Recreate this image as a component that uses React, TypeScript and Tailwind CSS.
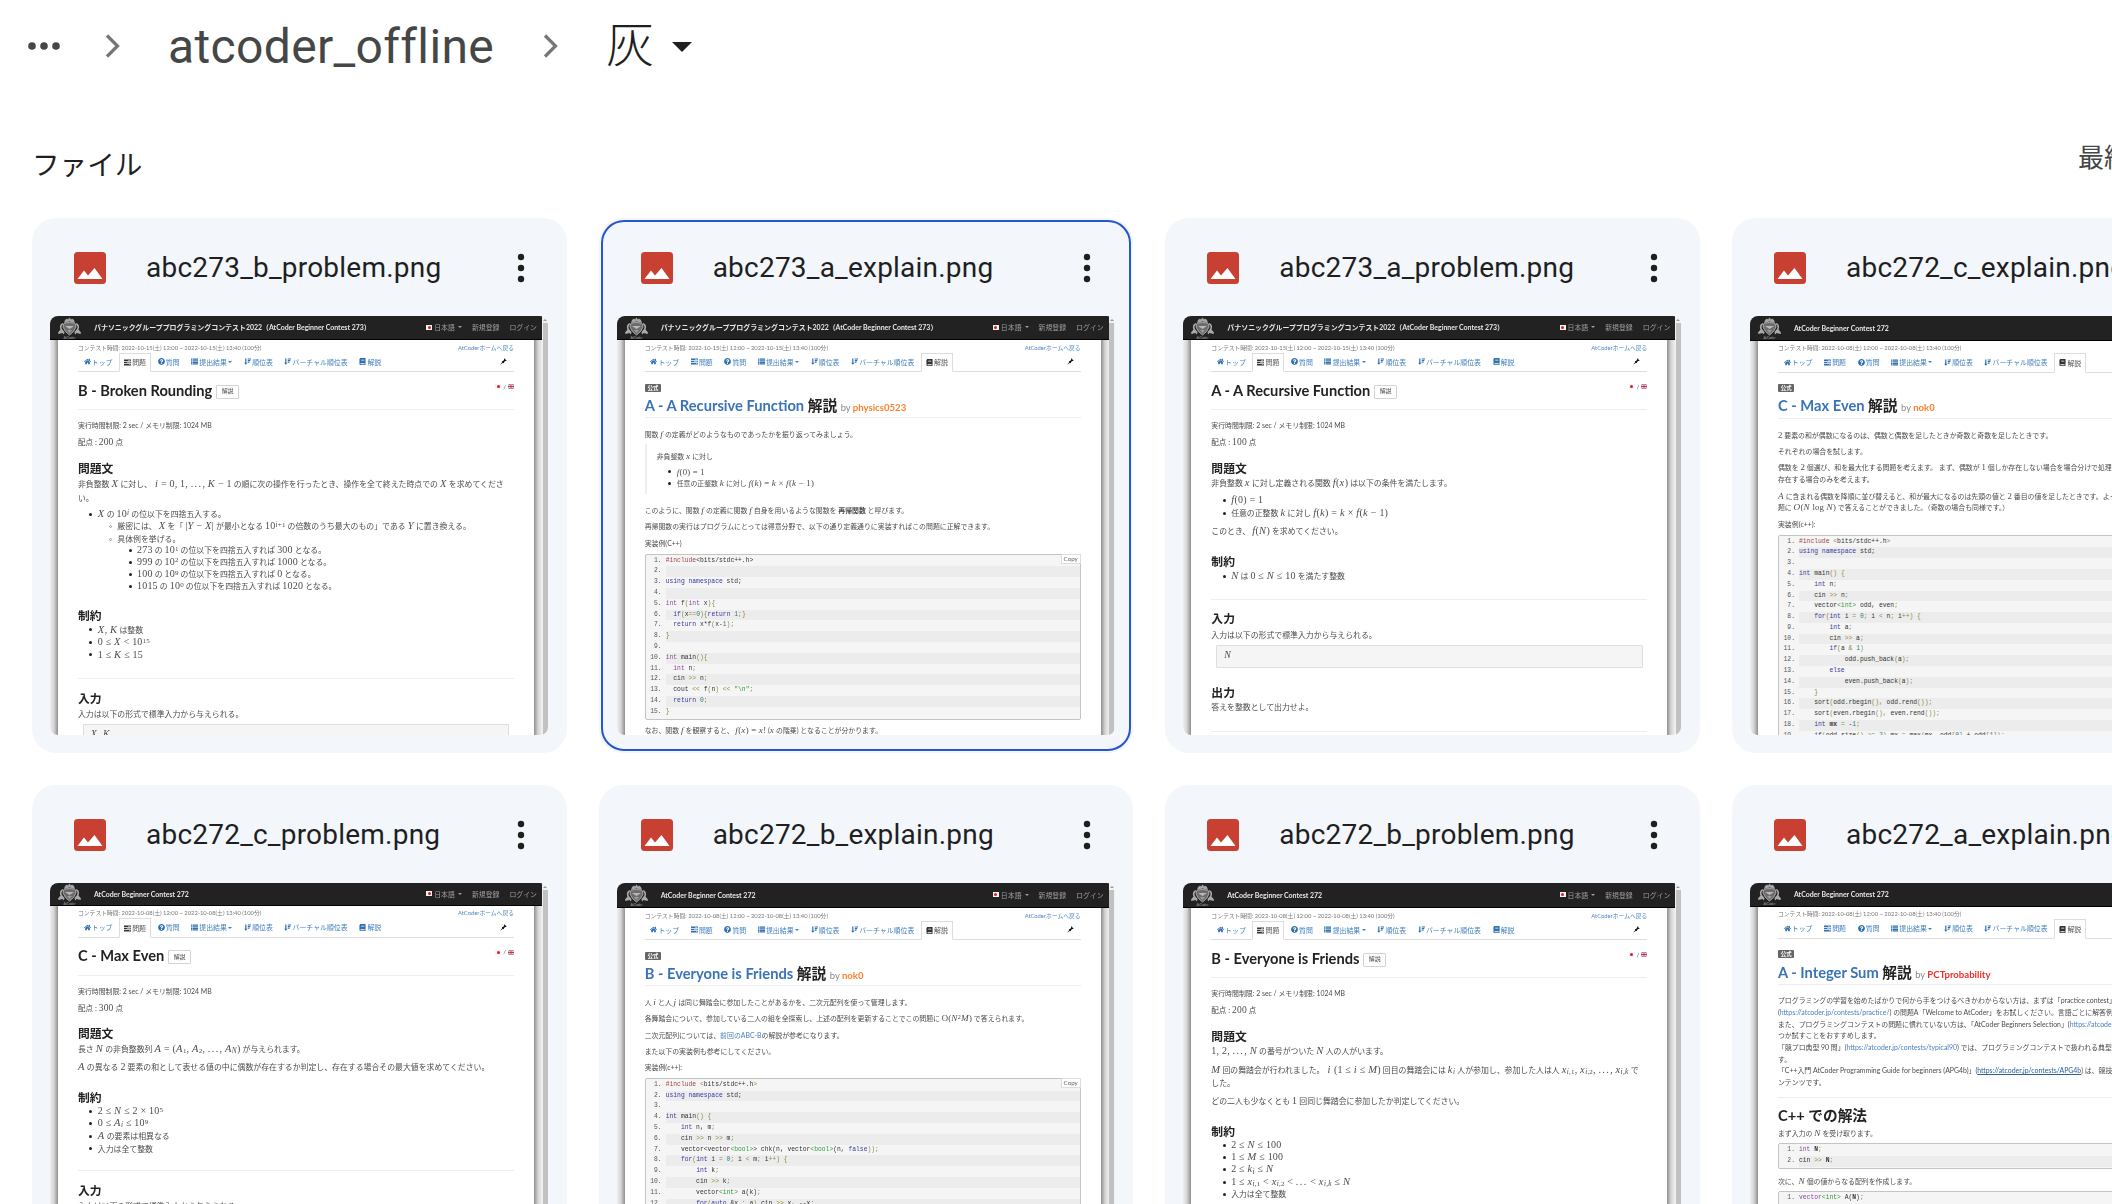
import React from "react";
import { FaHome, FaQuestionCircle, FaBook } from "react-icons/fa";

type Kids = { children?: React.ReactNode; className?: string };

/* ---------- text helpers for the page previews ---------- */

const T = ({ children, className = "" }: Kids) => (
  <div className={`h-[10px] leading-[10px] whitespace-pre ${className}`}>{children}</div>
);

const H3 = ({ children, className = "" }: Kids) => (
  <div className={`h-[10px] leading-[11px] text-[11.8px] font-bold text-[#222] whitespace-pre ${className}`}>{children}</div>
);

const Hr = ({ className = "" }: Kids) => <div className={`h-px bg-[#eeeeee] ${className}`} />;

const M = ({ children, className = "" }: Kids) => (
  <span className={`font-['Liberation_Serif'] text-[1.33em] tracking-[0.04em] italic leading-none ${className}`}>{children}</span>
);
const R = ({ children }: Kids) => (
  <span className="font-['Liberation_Serif'] text-[1.27em] tracking-[0.02em] leading-none">{children}</span>
);
const Dots = () => <span className="tracking-[0.14em]">...</span>;
const Sup = ({ children }: Kids) => <span className="relative -top-[0.4em] text-[0.7em]">{children}</span>;
const Sub = ({ children }: Kids) => <span className="relative top-[0.2em] text-[0.7em]">{children}</span>;

const Li = ({ children, className = "", ring = false }: Kids & { ring?: boolean }) => (
  <div className={`flex h-[10px] items-center gap-[5.5px] leading-[10px] whitespace-pre ${className}`}>
    <span
      className={
        ring
          ? "h-[3px] w-[3px] shrink-0 rounded-full border border-[#999]"
          : "h-[3px] w-[3px] shrink-0 rounded-full bg-[#222]"
      }
    />
    <span>{children}</span>
  </div>
);

/* ---------- syntax colours ---------- */

const K = ({ children }: Kids) => <span className="text-[#3a3aa0]">{children}</span>;
const C = ({ children }: Kids) => <span className="text-[#a04848]">{children}</span>;
const G = ({ children }: Kids) => <span className="text-[#2f9a3c]">{children}</span>;
const N = ({ children }: Kids) => <span className="text-[#2a8080]">{children}</span>;
const O = ({ children }: Kids) => <span className="text-[#8a8a40]">{children}</span>;
const V = ({ children }: Kids) => <span className="text-[#8a4a9a]">{children}</span>;

const Code = ({ lines, copy = false, className = "" }: { lines: React.ReactNode[]; copy?: boolean; className?: string }) => (
  <div className={`relative rounded-[2px] border border-[#c4c4c4] bg-[#f5f5f5] py-[1px] font-['Liberation_Mono'] text-[6.35px] text-[#333] ${className}`}>
    {lines.map((l, i) => (
      <div key={i} className="flex h-[10.81px] leading-[10.81px] whitespace-pre">
        <span className="w-[16px] shrink-0 text-right text-[#555]">{i + 1}.</span>
        <span className={`ml-[4px] flex-1 ${i % 2 ? "bg-[#ececec]" : ""}`}>{l}</span>
      </div>
    ))}
    {copy && (
      <span className="absolute -top-px -right-px flex h-[10px] w-[20px] items-center justify-center border border-[#dddddd] bg-white font-['Lato'] text-[6.2px] leading-[10px] text-[#666]">
        Copy
      </span>
    )}
  </div>
);

/* ---------- AtCoder chrome ---------- */

const Emblem = () => (
  <svg viewBox="0 0 50 44" className="h-[22px] w-[25px]" fill="none">
    <path d="M16 6 20 3 22 5 25 1 28 5 30 3 34 6 36 12 25 9 14 12Z" fill="#a4a4a4" />
    <path d="M13 14C17 10 33 10 37 14L38 20 33 29 25 36 17 29 12 20Z" fill="#6c6c6c" stroke="#b4b4b4" strokeWidth="1.8" />
    <path d="M16 18H34L25 24Z" fill="#b9b9b9" />
    <path d="M20 26H30L25 32Z" fill="#9a9a9a" />
    <path d="M11 12C5 15 5 21 7 25L2 31 3 34 11 32 14 35 15 30 10 24C8 20 9 16 13 14Z" fill="#a9a9a9" />
    <path d="M39 12C45 15 45 21 43 25L48 31 47 34 39 32 36 35 35 30 40 24C42 20 41 16 37 14Z" fill="#a9a9a9" />
    <text x="25" y="43" textAnchor="middle" fontSize="6.5" fontFamily="Lato" fill="#aaa">AtCoder</text>
  </svg>
);

const JpFlag = ({ className = "" }: Kids) => (
  <span className={`flex h-[5px] w-[6px] items-center justify-center bg-[#fbf2f2] ${className}`}>
    <span className="h-[3px] w-[3px] rounded-full bg-[#d0202c]" />
  </span>
);

const GbFlag = () => (
  <svg viewBox="0 0 12 10" className="h-[5px] w-[6px]">
    <rect width="12" height="10" fill="#6c74b4" />
    <path d="M0 0 12 10M12 0 0 10" stroke="#e8d8e0" strokeWidth="1.6" />
    <path d="M6 0V10M0 5H12" stroke="#fff" strokeWidth="3.6" />
    <path d="M6 0V10M0 5H12" stroke="#d0303c" strokeWidth="2.2" />
  </svg>
);

const Caret = ({ className = "" }: Kids) => (
  <svg viewBox="0 0 8 4" className={`h-[2px] w-[4px] ${className}`}><path d="M0 0H8L4 4Z" fill="currentColor" /></svg>
);

type IconProps = { className?: string };

const TasksIcon = ({ className = "" }: IconProps) => (
  <svg viewBox="0 0 14 14" className={className} fill="currentColor">
    <path d="M0 1H14V4.2H0ZM0 5.4H14V8.6H0ZM0 9.8H14V13H0Z" />
    <path d="M8 2H13V3.2H8ZM6 6.4H13V7.6H6ZM10 10.8H13V12H10Z" fill="#fff" />
  </svg>
);

const ListIcon = ({ className = "" }: IconProps) => (
  <svg viewBox="0 0 14 14" className={className} fill="currentColor">
    <path d="M0 1H3V3.4H0ZM4 1H14V3.4H4ZM0 4.3H3V6.6H0ZM4 4.3H14V6.6H4ZM0 7.5H3V9.8H0ZM4 7.5H14V9.8H4ZM0 10.7H3V13H0ZM4 10.7H14V13H4Z" />
  </svg>
);

const SortIcon = ({ className = "" }: IconProps) => (
  <svg viewBox="0 0 14 14" className={className} fill="currentColor">
    <path d="M2.4 1H4.8V9.4H7L3.6 13.4.2 9.4H2.4ZM7.5 1H14V3.2H7.5ZM7.5 4.2H12.6V6.4H7.5ZM7.5 7.4H11V9.4H7.5Z" />
  </svg>
);

const PinIcon = ({ className = "" }: IconProps) => (
  <svg viewBox="0 0 14 14" className={className} fill="currentColor">
    <path d="M8.6.6 13.4 5.4 12 6 10.4 5.8 8.2 8.2 8 10.6 6 9.6 1 13.2.6 12.8 4.6 8 3.6 6 6 5.8 8.4 3.6 8 2Z" />
  </svg>
);

const tabs = [
  { label: "トップ", Icon: FaHome },
  { label: "問題", Icon: TasksIcon },
  { label: "質問", Icon: FaQuestionCircle },
  { label: "提出結果", Icon: ListIcon, caret: true },
  { label: "順位表", Icon: SortIcon },
  { label: "バーチャル順位表", Icon: SortIcon },
  { label: "解説", Icon: FaBook },
];

type PageProps = { contest: "273" | "272"; active: string; bar: string; children: React.ReactNode };

const Page = ({ contest, active, bar, children }: PageProps) => {
  const day = contest === "273" ? "2022-10-15(土)" : "2022-10-08(土)";
  return (
    <div className="flex h-[419px] w-[498px] overflow-hidden rounded-[8px] bg-white font-['Lato','Noto_Sans_CJK_JP',sans-serif] text-[6.9px] text-[#4c4c4c]">
      <div className="flex w-[492px] shrink-0 flex-col">
        <div className={`flex shrink-0 items-center border-b border-black bg-[#222222] text-[#9d9d9d] ${bar}`}>
          <div className="ml-[7px] w-[25px]"><Emblem /></div>
          <span className="ml-[12px] text-[6.95px] whitespace-pre font-bold text-[#e6e6e6] blur-[0.3px]">
            {contest === "273" ? "パナソニックグループプログラミングコンテスト2022（AtCoder Beginner Contest 273）" : "AtCoder Beginner Contest 272"}
          </span>
          <div className="mr-[5px] ml-auto flex items-center whitespace-pre blur-[0.3px]">
            <JpFlag />
            <span className="ml-[2px]">日本語</span>
            <Caret className="ml-[3px]" />
            <span className="ml-[10px]">新規登録</span>
            <span className="ml-[10px]">ログイン</span>
          </div>
        </div>
        <div className="flex min-h-0 flex-1">
          <div className="w-[8px] shrink-0 bg-linear-to-r from-[#efefef] via-[#d4d4d4] to-[#8f8f8f]" />
          <div className="min-w-0 flex-1 overflow-hidden bg-white pr-[20px] pl-[20px]">
            <div className="blur-[0.35px]">
              <div className="mt-[2.7px] flex h-[10px] justify-between text-[5.8px] leading-[10px] whitespace-pre text-[#777]">
                <span>コンテスト時間: {day} 12:00 ~ {day} 13:40 (100分)</span>
                <span className="text-[#4f86c0]">AtCoderホームへ戻る</span>
              </div>
              <div className="flex h-[19.6px] items-stretch gap-[1.4px] border-b border-[#dddddd] pl-[0.5px] whitespace-pre text-[#4480bc]">
                {tabs.map(({ label, Icon, caret }) => (
                  <span
                    key={label}
                    className={`flex items-center border px-[4.1px] ${
                      label === active ? "-mb-px border-[#dddddd] border-b-white bg-white text-[#555]" : "border-transparent"
                    }`}
                  >
                    <Icon className={`h-[7px] w-[7px] ${label === active ? "text-[#333]" : "text-[#2f6fb4]"}`} />
                    <span className="ml-[1.2px]">{label}</span>
                    {caret && <Caret className="ml-[1.5px]" />}
                  </span>
                ))}
                <PinIcon className="mr-[7px] ml-auto h-[7px] w-[7px] self-center text-[#111]" />
              </div>
              {children}
            </div>
          </div>
          <div className="w-[8px] shrink-0 bg-linear-to-l from-[#efefef] via-[#d4d4d4] to-[#8f8f8f]" />
        </div>
      </div>
      <div className="flex flex-1 flex-col items-center bg-[#f1f1f1]">
        <Caret className="my-[2.5px] rotate-180 text-[#999]" />
        <div className="w-[5px] flex-1 bg-[#c1c1c1]" />
      </div>
    </div>
  );
};

const ProblemTitle = ({ title, score }: { title: string; score: string }) => (
  <>
    <div className="mt-[11.3px] flex h-[14px] items-center">
      <span className="text-[14.65px] leading-[14px] font-bold whitespace-pre text-[#222]">{title}</span>
      <span className="mt-[2px] ml-[4px] flex h-[14px] w-[22.5px] items-center justify-center rounded-[1px] border border-[#d4d4d4] text-[5.9px]">解説</span>
      <span className="ml-auto flex items-center gap-[2px] self-start text-[6px] leading-[6px]"><JpFlag />/<GbFlag /></span>
    </div>
    <Hr className="mt-[11.3px]" />
    <T className="mt-[10.4px]">実行時間制限: 2 sec / メモリ制限: 1024 MB</T>
    <T className="mt-[7.7px] text-[7.5px]">配点 : <R>{score}</R> 点</T>
  </>
);

const ExplainTitle = ({ title, by, red = false }: { title: string; by: string; red?: boolean }) => (
  <>
    <div className="mt-[11.3px] h-[8px] w-[16.5px] rounded-[1px] bg-[#666] text-center text-[5.4px] leading-[8px] font-bold text-white">公式</div>
    <div className="mt-[6.3px] flex h-[14px] items-baseline text-[14.7px] leading-[14px] font-bold whitespace-pre">
      <span className="text-[#3a73b8]">{title}</span>
      <span className="text-[#222]"> 解説 </span>
      <span className="text-[9.4px] font-normal text-[#888]">by </span>
      <span className={`text-[9.6px] ${red ? "text-[#f03028]" : "text-[#ff8030]"}`}>{by}</span>
    </div>
    <Hr className="mt-[5.4px]" />
  </>
);

const Box = ({ children, className = "" }: Kids) => (
  <div className={`mx-[4.8px] h-[23px] rounded-[1px] border border-[#dddddd] bg-[#f5f5f5] px-[7px] text-[7.4px] leading-[20px] whitespace-pre ${className}`}>{children}</div>
);

/* ---------- previews ---------- */

const P273B = () => (
  <Page contest="273" active="問題" bar="h-[24px]">
    <ProblemTitle title="B - Broken Rounding" score="200" />
    <div className="text-[7.88px]">
      <H3 className="mt-[15px]">問題文</H3>
      <T className="mt-[5.7px]">非負整数 <M>X</M> に対し、<M> i</M><R> = 0, 1, <Dots />, </R><M>K</M><R> − 1</R> の順に次の操作を行ったとき、操作を全て終えた時点での <M>X</M> を求めてくださ</T>
      <T className="mt-[4px]">い。</T>
      <Li className="mt-[7px] pl-[11.3px]"><M>X</M> の <R>10</R><Sup><M>i</M></Sup> の位以下を四捨五入する。</Li>
      <Li ring className="mt-[2.3px] pl-[30.8px]">厳密には、 <M>X</M> を「 <R>|</R><M>Y</M><R> − </R><M>X</M><R>|</R> が最小となる <R>10</R><Sup><M>i</M><R>+1</R></Sup> の倍数のうち最大のもの」である <M>Y</M> に置き換える。</Li>
      <Li ring className="mt-[2.4px] pl-[30.8px]">具体例を挙げる。</Li>
      <Li className="mt-[1px] pl-[50.5px]"><R>273</R> の <R>10</R><Sup><R>1</R></Sup> の位以下を四捨五入すれば <R>300</R> となる。</Li>
      <Li className="mt-[1.8px] pl-[50.5px]"><R>999</R> の <R>10</R><Sup><R>2</R></Sup> の位以下を四捨五入すれば <R>1000</R> となる。</Li>
      <Li className="mt-[2.4px] pl-[50.5px]"><R>100</R> の <R>10</R><Sup><R>9</R></Sup> の位以下を四捨五入すれば <R>0</R> となる。</Li>
      <Li className="mt-[1.8px] pl-[50.5px]"><R>1015</R> の <R>10</R><Sup><R>0</R></Sup> の位以下を四捨五入すれば <R>1020</R> となる。</Li>
      <H3 className="mt-[18.6px]">制約</H3>
      <Li className="mt-[5px] pl-[11.3px]"><M>X</M><R>, </R><M>K</M> は整数</Li>
      <Li className="mt-[2.4px] pl-[11.3px]"><R>0 ≤ </R><M>X</M><R> {"<"} 10</R><Sup><R>15</R></Sup></Li>
      <Li className="mt-[2.6px] pl-[11.3px]"><R>1 ≤ </R><M>K</M><R> ≤ 15</R></Li>
      <Hr className="mt-[18.5px]" />
      <H3 className="mt-[13.5px]">入力</H3>
      <T className="mt-[6px]">入力は以下の形式で標準入力から与えられる。</T>
      <Box className="mt-[5.5px]"><M>X</M>   <M>K</M></Box>
    </div>
  </Page>
);

const E273A = () => (
  <Page contest="273" active="解説" bar="h-[24px]">
    <ExplainTitle title="A - A Recursive Function" by="physics0523" />
    <T className="mt-[10.8px]">関数 <M>f</M> の定義がどのようなものであったかを振り返ってみましょう。</T>
    <div className="mt-[5.3px] flow-root h-[49.3px] border-l-2 border-[#eeeeee] pl-[10px]">
      <T className="mt-[6.7px]">非負整数 <M>x</M> に対し</T>
      <Li className="mt-[5.6px] pl-[11.5px]"><M>f</M><R>(0) = 1</R></Li>
      <Li className="mt-[1.7px] pl-[11.5px]">任意の正整数 <M>k</M> に対し <M>f</M><R>(</R><M>k</M><R>) = </R><M>k</M><R> × </R><M>f</M><R>(</R><M>k</M><R> − 1)</R></Li>
    </div>
    <T className="mt-[11.4px]">このように、関数 <M>f</M> の定義に関数 <M>f</M> 自身を用いるような関数を <b>再帰関数</b> と呼びます。</T>
    <T className="mt-[6.3px]">再帰関数の実行はプログラムにとっては得意分野で、以下の通り定義通りに実装すればこの問題に正解できます。</T>
    <T className="mt-[6.7px]">実装例(C++)</T>
    <Code
      copy
      className="mt-[5.6px]"
      lines={[
        <><C>#include</C>{"<bits/stdc++.h>"}</>,
        "",
        <><K>using namespace</K> std;</>,
        "",
        <><V>int</V> f<O>(</O><V>int</V> x<O>){"{"}</O></>,
        <>  <K>if</K><O>(</O>x<O>==</O><N>0</N><O>){"{"}</O><K>return</K> <N>1</N><O>;{"}"}</O></>,
        <>  <K>return</K> x*f<O>(</O>x-<N>1</N><O>);</O></>,
        <O>{"}"}</O>,
        "",
        <><V>int</V> main<O>(){"{"}</O></>,
        <>  <V>int</V> n<O>;</O></>,
        <>  cin <O>{">>"}</O> n<O>;</O></>,
        <>  cout <O>{"<<"}</O> f<O>(</O>n<O>)</O> <O>{"<<"}</O> <G>"\n"</G><O>;</O></>,
        <>  <K>return</K> <N>0</N><O>;</O></>,
        <O>{"}"}</O>,
      ]}
    />
    <T className="mt-[5.3px]">なお、関数 <M>f</M> を観察すると、 <M>f</M><R>(</R><M>x</M><R>) = </R><M>x</M><R>!</R> (<M>x</M> の階乗) となることが分かります。</T>
  </Page>
);

const P273A = () => (
  <Page contest="273" active="問題" bar="h-[24px]">
    <ProblemTitle title="A - A Recursive Function" score="100" />
    <div className="text-[7.88px]">
      <H3 className="mt-[15px]">問題文</H3>
      <T className="mt-[5.5px]">非負整数 <M>x</M> に対し定義される関数 <M>f</M><R>(</R><M>x</M><R>)</R> は以下の条件を満たします。</T>
      <Li className="mt-[7.2px] pl-[11.3px]"><M>f</M><R>(0) = 1</R></Li>
      <Li className="mt-[2.6px] pl-[11.3px]">任意の正整数 <M>k</M> に対し <M>f</M><R>(</R><M>k</M><R>) = </R><M>k</M><R> × </R><M>f</M><R>(</R><M>k</M><R> − 1)</R></Li>
      <T className="mt-[8.2px]">このとき、 <M>f</M><R>(</R><M>N</M><R>)</R> を求めてください。</T>
      <H3 className="mt-[19.9px]">制約</H3>
      <Li className="mt-[5.4px] pl-[11.3px]"><M>N</M> は <R>0 ≤ </R><M>N</M><R> ≤ 10</R> を満たす整数</Li>
      <Hr className="mt-[17px]" />
      <H3 className="mt-[13.5px]">入力</H3>
      <T className="mt-[6.5px]">入力は以下の形式で標準入力から与えられる。</T>
      <Box className="mt-[5.5px]"><M>N</M></Box>
      <H3 className="mt-[18.3px]">出力</H3>
      <T className="mt-[5.7px]">答えを整数として出力せよ。</T>
      <Hr className="mt-[18.5px]" />
    </div>
  </Page>
);

const E272C = () => (
  <Page contest="272" active="解説" bar="h-[24.5px]">
    <ExplainTitle title="C - Max Even" by="nok0" />
    <T className="mt-[11px]"><R>2</R> 要素の和が偶数になるのは、偶数と偶数を足したときか奇数と奇数を足したときです。</T>
    <T className="mt-[6.3px]">それぞれの場合を試します。</T>
    <T className="mt-[6.4px]">偶数を <R>2</R> 個選び、和を最大化する問題を考えます。 まず、偶数が <R>1</R> 個しか存在しない場合を場合分けで処理し、2個以上</T>
    <T className="mt-[1.4px]">存在する場合のみを考えます。</T>
    <T className="mt-[6.7px]"><M>A</M> に含まれる偶数を降順に並び替えると、和が最大になるのは先頭の値と <R>2</R> 番目の値を足したときです。よって、この問</T>
    <T className="mt-[1.9px]">題に <M>O</M><R>(</R><M>N</M><R> log </R><M>N</M><R>)</R> で答えることができました。（奇数の場合も同様です。）</T>
    <T className="mt-[6.3px]">実装例(c++):</T>
    <Code
      className="mt-[5.8px]"
      lines={[
        <><C>#include</C> <O>{"<"}</O>bits/stdc++.h<O>{">"}</O></>,
        <><K>using namespace</K> std;</>,
        "",
        <><K>int</K> main<O>() {"{"}</O></>,
        <>    <K>int</K> n<O>;</O></>,
        <>    cin <O>{">>"}</O> n<O>;</O></>,
        <>    vector<G>{"<int>"}</G> odd, even<O>;</O></>,
        <>    <K>for</K><O>(</O><K>int</K> i <O>=</O> <N>0</N><O>;</O> i <O>{"<"}</O> n<O>;</O> i<O>++) {"{"}</O></>,
        <>        <K>int</K> a<O>;</O></>,
        <>        cin <O>{">>"}</O> a<O>;</O></>,
        <>        <K>if</K><O>(</O>a <O>&</O> <N>1</N><O>)</O></>,
        <>            odd.push_back<O>(</O>a<O>);</O></>,
        <>        <K>else</K></>,
        <>            even.push_back<O>(</O>a<O>);</O></>,
        <>    <O>{"}"}</O></>,
        <>    sort<O>(</O>odd.rbegin<O>(),</O> odd.rend<O>());</O></>,
        <>    sort<O>(</O>even.rbegin<O>(),</O> even.rend<O>());</O></>,
        <>    <K>int</K> <b>mx</b> <O>=</O> -<N>1</N><O>;</O></>,
        <>    <K>if</K><O>(</O>odd.size<O>()</O> <O>{">="}</O> <N>2</N><O>)</O> mx <O>=</O> max<O>(</O>mx, odd<O>[</O><N>0</N><O>]</O> + odd<O>[</O><N>1</N><O>]);</O></>,
      ]}
    />
  </Page>
);

const P272C = () => (
  <Page contest="272" active="問題" bar="h-[22.7px]">
    <ProblemTitle title="C - Max Even" score="300" />
    <div className="text-[7.88px]">
      <H3 className="mt-[14.6px]">問題文</H3>
      <T className="mt-[5.4px]">長さ <M>N</M> の非負整数列 <M>A</M><R> = (</R><M>A</M><Sub><R>1</R></Sub><R>, </R><M>A</M><Sub><R>2</R></Sub><R>, <Dots />, </R><M>A</M><Sub><M>N</M></Sub><R>)</R> が与えられます。</T>
      <T className="mt-[8.6px]"><M>A</M> の異なる <R>2</R> 要素の和として表せる値の中に偶数が存在するか判定し、存在する場合その最大値を求めてください。</T>
      <H3 className="mt-[19.7px]">制約</H3>
      <Li className="mt-[4.7px] pl-[11.3px]"><R>2 ≤ </R><M>N</M><R> ≤ 2 × 10</R><Sup><R>5</R></Sup></Li>
      <Li className="mt-[2.1px] pl-[11.3px]"><R>0 ≤ </R><M>A</M><Sub><M>i</M></Sub><R> ≤ 10</R><Sup><R>9</R></Sup></Li>
      <Li className="mt-[3px] pl-[11.3px]"><M>A</M> の要素は相異なる</Li>
      <Li className="mt-[2.3px] pl-[11.3px]">入力は全て整数</Li>
      <Hr className="mt-[16px]" />
      <H3 className="mt-[13.8px]">入力</H3>
      <T className="mt-[6px]">入力は以下の形式で標準入力から与えられる。</T>
    </div>
  </Page>
);

const E272B = () => (
  <Page contest="272" active="解説" bar="h-[25px]">
    <ExplainTitle title="B - Everyone is Friends" by="nok0" />
    <T className="mt-[10.5px]">人 <M>i</M> と人 <M>j</M> は同じ舞踏会に参加したことがあるかを、二次元配列を使って管理します。</T>
    <T className="mt-[6.6px]">各舞踏会について、参加している二人の組を全探索し、上述の配列を更新することでこの問題に <R>O(</R><M>N</M><Sup><R>2</R></Sup><M>M</M><R>)</R> で答えられます。</T>
    <T className="mt-[6.5px]">二次元配列については、<span className="text-[#4a80c0]">前回のABC-B</span>の解説が参考になります。</T>
    <T className="mt-[6px]">また以下の実装例も参考にしてください。</T>
    <T className="mt-[6.6px]">実装例(c++):</T>
    <Code
      copy
      className="mt-[5.4px]"
      lines={[
        <><C>#include</C> <O>{"<"}</O>bits/stdc++.h<O>{">"}</O></>,
        <><K>using namespace</K> std;</>,
        "",
        <><K>int</K> main<O>() {"{"}</O></>,
        <>    <K>int</K> n, m<O>;</O></>,
        <>    cin <O>{">>"}</O> n <O>{">>"}</O> m<O>;</O></>,
        <>    vector{"<"}vector<G>{"<bool>"}</G>{">"} chk(n, vector<G>{"<bool>"}</G>(n, <K>false</K><O>));</O></>,
        <>    <K>for</K><O>(</O><K>int</K> i <O>=</O> <N>0</N><O>;</O> i <O>{"<"}</O> m<O>;</O> i<O>++) {"{"}</O></>,
        <>        <K>int</K> k<O>;</O></>,
        <>        cin <O>{">>"}</O> k<O>;</O></>,
        <>        vector<G>{"<int>"}</G> a(k)<O>;</O></>,
        <>        <K>for</K><O>(</O><K>auto</K> &x <O>:</O> a<O>)</O> cin <O>{">>"}</O> x, --x<O>;</O></>,
        "",
      ]}
    />
  </Page>
);

const P272B = () => (
  <Page contest="272" active="問題" bar="h-[25px]">
    <ProblemTitle title="B - Everyone is Friends" score="200" />
    <div className="text-[7.88px]">
      <H3 className="mt-[14.8px]">問題文</H3>
      <T className="mt-[5.6px]"><R>1, 2, <Dots />, </R><M>N</M> の番号がついた <M>N</M> 人の人がいます。</T>
      <T className="mt-[8.2px]"><M>M</M> 回の舞踏会が行われました。<M> i </M><R>(1 ≤ </R><M>i</M><R> ≤ </R><M>M</M><R>)</R> 回目の舞踏会には <M>k</M><Sub><M>i</M></Sub> 人が参加し、参加した人は人 <M>x</M><Sub><M>i</M><R>,1</R></Sub><R>, </R><M>x</M><Sub><M>i</M><R>,2</R></Sub><R>, <Dots />, </R><M>x</M><Sub><M>i,k</M></Sub> で</T>
      <T className="mt-[3.6px]">した。</T>
      <T className="mt-[8px]">どの二人も少なくとも <R>1</R> 回同じ舞踏会に参加したか判定してください。</T>
      <H3 className="mt-[19.5px]">制約</H3>
      <Li className="mt-[5px] pl-[11.3px]"><R>2 ≤ </R><M>N</M><R> ≤ 100</R></Li>
      <Li className="mt-[2px] pl-[11.3px]"><R>1 ≤ </R><M>M</M><R> ≤ 100</R></Li>
      <Li className="mt-[2.3px] pl-[11.3px]"><R>2 ≤ </R><M>k</M><Sub><M>i</M></Sub><R> ≤ </R><M>N</M></Li>
      <Li className="mt-[2.5px] pl-[11.3px]"><R>1 ≤ </R><M>x</M><Sub><M>i</M><R>,1</R></Sub><R> {"<"} </R><M>x</M><Sub><M>i</M><R>,2</R></Sub><R> {"<"} <Dots /> {"<"} </R><M>x</M><Sub><M>i,k</M></Sub><R> ≤ </R><M>N</M></Li>
      <Li className="mt-[2px] pl-[11.3px]">入力は全て整数</Li>
    </div>
  </Page>
);

const A = ({ children }: Kids) => <span className="text-[#4a80c0]">{children}</span>;

const E272A = () => (
  <Page contest="272" active="解説" bar="h-[23.7px]">
    <ExplainTitle title="A - Integer Sum" by="PCTprobability" red />
    <T className="mt-[10.3px]">プログラミングの学習を始めたばかりで何から手をつけるべきかわからない方は、まずは「practice contest」</T>
    <T className="mt-[1.7px]">(<A>https://atcoder.jp/contests/practice/</A>) の問題A「Welcome to AtCoder」をお試しください。言語ごとに解答例があります。</T>
    <T className="mt-[1.7px]">また、プログラミングコンテストの問題に慣れていない方は、「AtCoder Beginners Selection」(<A>https://atcoder.jp/</A></T>
    <T className="mt-[1.6px]">つか試すことをおすすめします。</T>
    <T className="mt-[1.5px]">「競プロ典型 90 問」(<A>https://atcoder.jp/contests/typical90</A>) では、プログラミングコンテストで扱われる典型的なテーマ</T>
    <T className="mt-[2.2px]">す。</T>
    <T className="mt-[1.4px]">「C++入門 AtCoder Programming Guide for beginners (APG4b)」(<span className="text-[#2a5f9a] underline">https://atcoder.jp/contests/APG4b</span>) は、競技プログラミング</T>
    <T className="mt-[2px]">ンテンツです。</T>
    <Hr className="mt-[9.9px]" />
    <div className="mt-[9.8px] h-[14px] text-[14.7px] leading-[14px] font-bold whitespace-pre text-[#222]">C++ での解法</div>
    <T className="mt-[6.4px]">まず入力の <M>N</M> を受け取ります。</T>
    <Code className="mt-[5px]" lines={[<><V>int</V> <b>N</b><O>;</O></>, <>cin <O>{">>"}</O> <b>N</b><O>;</O></>]} />
    <T className="mt-[6.6px]">次に、<M>N</M> 個の値からなる配列を作成します。</T>
    <Code className="mt-[5.2px]" lines={[<><V>vector</V><G>{"<int>"}</G> A(<b>N</b>)<O>;</O></>]} />
  </Page>
);

/* ---------- Drive file grid ---------- */

const ImageIcon = () => (
  <svg viewBox="0 0 32 32" className="h-8 w-8">
    <rect width="32" height="32" rx="3.5" fill="#c74031" />
    <path d="M3.5 27 10 18.5 14 23.5 20.5 16 28.5 27Z" fill="#fff" />
  </svg>
);

const Kebab = () => (
  <svg viewBox="0 0 8 30" className="h-[30px] w-2" fill="#1f1f1f">
    <circle cx="4" cy="4" r="3.2" />
    <circle cx="4" cy="15" r="3.2" />
    <circle cx="4" cy="26" r="3.2" />
  </svg>
);

const files = [
  { name: "abc273_b_problem.png", Preview: P273B },
  { name: "abc273_a_explain.png", Preview: E273A, selected: true },
  { name: "abc273_a_problem.png", Preview: P273A },
  { name: "abc272_c_explain.png", Preview: E272C },
  { name: "abc272_c_problem.png", Preview: P272C },
  { name: "abc272_b_explain.png", Preview: E272B },
  { name: "abc272_b_problem.png", Preview: P272B },
  { name: "abc272_a_explain.png", Preview: E272A },
];

const Chevron = () => (
  <svg viewBox="0 0 16 24" className="h-6 w-4" fill="none" stroke="#747775" strokeWidth="3.2">
    <path d="M2 1.5 12.5 12 2 22.5" />
  </svg>
);

export default function App() {
  return (
    <div className="h-[1204px] w-[2112px] overflow-hidden bg-white font-['Roboto','Noto_Sans_CJK_JP',sans-serif] text-[#1f1f1f]">
      <nav className="flex h-[92px] items-center pl-7">
        <svg viewBox="0 0 32 8" className="h-2 w-8" fill="#444746">
          <circle cx="4" cy="4" r="3.8" />
          <circle cx="16" cy="4" r="3.8" />
          <circle cx="28" cy="4" r="3.8" />
        </svg>
        <span className="ml-[45px]"><Chevron /></span>
        <span className="mt-[2px] ml-[47px] w-[375px] text-[48px] leading-none tracking-[0.35px] text-[#444746]">atcoder_offline</span>
        <Chevron />
        <span className="ml-[47px] text-[48px] leading-none font-light">灰</span>
        <svg viewBox="0 0 20 10" className="mt-[2px] ml-[18px] h-[10px] w-5" fill="#1f1f1f"><path d="M0 0H20L10 10Z" /></svg>
      </nav>
      <div className="flex h-[126px] w-[2200px] items-start pl-8">
        <span className="mt-[53px] text-[27.6px] leading-[42px]">ファイル</span>
        <span className="mt-[46px] ml-auto w-[122px] text-[26px] leading-[40px] whitespace-nowrap text-[#444746]">最終更新</span>
      </div>
      <div className="grid w-[2266.67px] grid-cols-4 gap-8 pl-8">
        {files.map(({ name, Preview, selected }) => (
          <div key={name} className="relative h-[535px] rounded-[24px] bg-[#f3f6fb]">
            {selected && <div className="absolute inset-[2px] rounded-[23px] border-2 border-[#2456cc]" />}
            <div className="flex h-[98px] items-center pt-px pr-[42px] pl-[42px]">
              <ImageIcon />
              <span className="ml-[40px] text-[28px] leading-none tracking-[0.22px] whitespace-nowrap">{name}</span>
              <span className="ml-auto"><Kebab /></span>
            </div>
            <div className="pl-[18px]"><Preview /></div>
          </div>
        ))}
      </div>
    </div>
  );
}
